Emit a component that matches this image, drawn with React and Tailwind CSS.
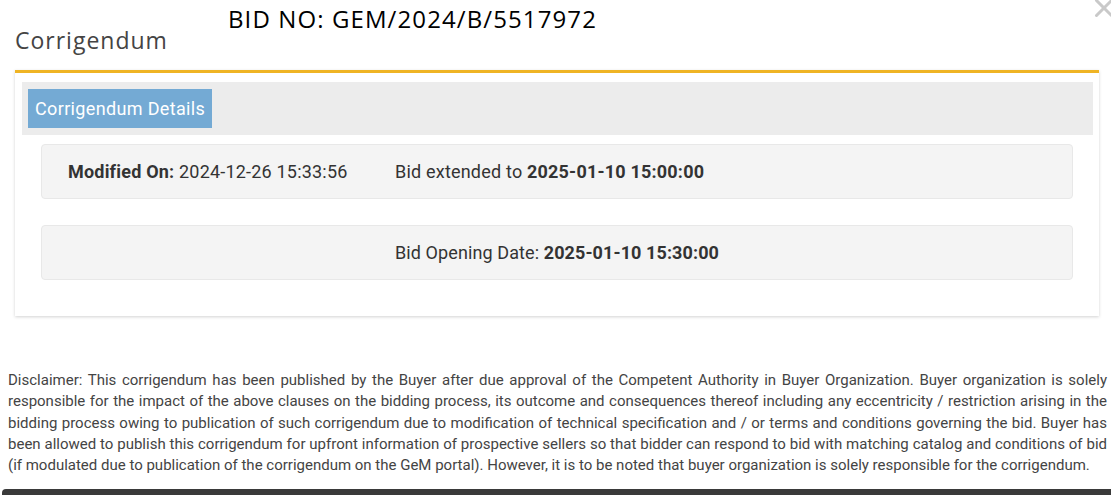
import { X } from 'lucide-react';

const roboto = { fontFamily: 'Roboto, "Liberation Sans", sans-serif' };

export default function App() {
  return (
    <div className="w-[1111px] h-[495px] bg-white overflow-hidden flex flex-col relative">
      <X size={30} strokeWidth={2.4} className="absolute left-[1089px] top-[-7px] text-[#c9c9c9]" />

      {/* heading */}
      <div className="relative h-[70px] shrink-0 font-['Open_Sans',sans-serif]">
        <h4 className="absolute left-[15px] top-[29px] text-[23px] leading-none tracking-[1px] text-[#444]">
          Corrigendum
        </h4>
        <div className="absolute left-[228px] top-[7px] text-[24px] leading-none tracking-[1.1px] text-black">
          BID NO: GEM/2024/B/5517972
        </div>
      </div>

      {/* panel */}
      <div className="ml-[15px] mr-[12px] border-t-[3px] border-[#efb424] bg-white shadow-[0_1px_3px_rgba(0,0,0,0.18)] px-[7px] pt-[9px] pb-[36px]" style={roboto}>
        <div className="bg-[#ececec] h-[53px] flex items-center px-[6px] mr-[-1px]">
          <div className="bg-[#74aad4] text-white text-[18px] tracking-[0.35px] h-[39px] flex items-center px-[7px]">
            Corrigendum Details
          </div>
        </div>

        <div className="px-[19px] pt-[9px] flex flex-col gap-[26px]">
          <div className="h-[55px] bg-[#f4f4f4] border border-[#e8e8e8] rounded-[4px] flex items-center text-[18px] tracking-[0.2px] text-[#333]">
            <div className="w-[353px] pl-[26px]">
              <span className="font-bold">Modified On:</span> 2024-12-26 15:33:56
            </div>
            <div>
              Bid extended to <span className="font-bold">2025-01-10 15:00:00</span>
            </div>
          </div>
          <div className="h-[55px] bg-[#f4f4f4] border border-[#e8e8e8] rounded-[4px] flex items-center justify-center text-[18px] tracking-[0.1px] text-[#333]">
            <div>
              Bid Opening Date: <span className="font-bold">2025-01-10 15:30:00</span>
            </div>
          </div>
        </div>
      </div>

      {/* disclaimer */}
      <p
        style={roboto}
        className="mt-[54px] pl-[8px] pr-[4px] text-[15px] leading-[21.3px] text-[#444] text-justify"
      >
        Disclaimer: This corrigendum has been published by the Buyer after due approval of the Competent Authority in Buyer Organization. Buyer organization is solely responsible for the impact of the above clauses on the bidding process, its outcome and consequences thereof including any eccentricity / restriction arising in the bidding process owing to publication of such corrigendum due to modification of technical specification and / or terms and conditions governing the bid. Buyer has been allowed to publish this corrigendum for upfront information of prospective sellers so that bidder can respond to bid with matching catalog and conditions of bid (if modulated due to publication of the corrigendum on the GeM portal). However, it is to be noted that buyer organization is solely responsible for the corrigendum.
      </p>

      <div className="mt-auto h-[6px] bg-[#3a3a3a] rounded-tl-[4px] ml-[2px]" />
    </div>
  );
}
